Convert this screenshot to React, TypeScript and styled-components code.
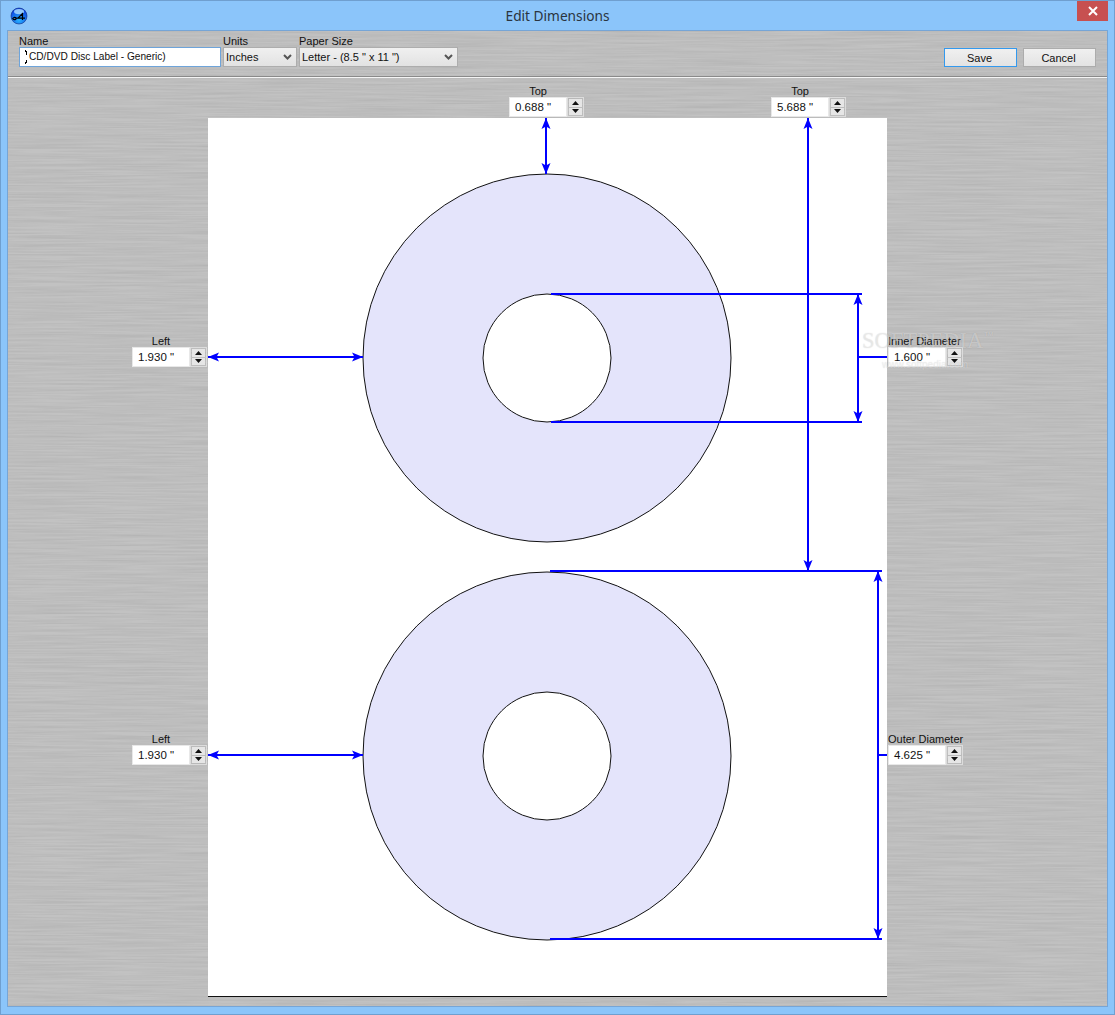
import React from 'react';
import styled, { createGlobalStyle } from 'styled-components';

const brushed = `url("data:image/svg+xml,%3Csvg xmlns='http://www.w3.org/2000/svg' width='1100' height='980'%3E%3Cfilter id='b' x='0' y='0' width='100%25' height='100%25'%3E%3CfeTurbulence type='fractalNoise' baseFrequency='0.012 0.55' numOctaves='3' seed='7'/%3E%3CfeColorMatrix values='0 0 0 0 0 0 0 0 0 0 0 0 0 0 0 0.9 0 0 0 -0.27'/%3E%3C/filter%3E%3Crect width='1100' height='980' fill='%23c2c2c2'/%3E%3Crect width='1100' height='980' filter='url(%23b)' fill='black' opacity='.12'/%3E%3C/svg%3E")`;

const GlobalStyle = createGlobalStyle`
  html, body { margin: 0; padding: 0; background: #8bc5fa; }
  body { font-family: "Liberation Sans", "Noto Sans", sans-serif; font-size: 11px; color: #111; }
`;

const Window = styled.div`
  position: relative;
  width: 1115px;
  height: 1015px;
  box-sizing: border-box;
  border: 1px solid #6f9fcf;
  background: #8bc5fa;
  display: flex;
  flex-direction: column;
  overflow: hidden;
`;

const TitleBar = styled.header`
  height: 29px;
  flex: none;
  display: flex;
  align-items: center;
  justify-content: center;
  position: relative;
  font-family: "Noto Sans", sans-serif;
  font-size: 13.7px;
  color: #2a3440;
  padding-bottom: 1px;
  box-sizing: border-box;
`;

const AppIcon = styled.svg`
  position: absolute;
  left: 9px;
  top: 6px;
`;

const CloseButton = styled.div`
  position: absolute;
  right: 6px;
  top: 0;
  width: 31px;
  height: 20px;
  background: #c75050;
  display: flex;
  align-items: center;
  justify-content: center;
`;

const Client = styled.main`
  flex: 1;
  margin: 0 6px 7px 6px;
  border: 1px solid #76a5d6;
  background-color: #c0c0c0;
  background-image: ${brushed};
  display: flex;
  flex-direction: column;
  min-height: 0;
`;

const Toolbar = styled.div`
  height: 46px;
  flex: none;
  box-sizing: border-box;
  padding: 4px 11px 0;
  display: flex;
  align-items: flex-start;
  gap: 2px;
  border-bottom: 1px solid #8a8a8a;
  box-shadow: 0 1px 0 #f4f4f4;
`;

const Group = styled.label<{ $w: number }>`
  display: flex;
  flex-direction: column;
  width: ${p => p.$w}px;
  line-height: 12px;
`;

const NameBox = styled.div`
  height: 20px;
  box-sizing: border-box;
  border: 1px solid #6ea4da;
  background: #fff;
  display: flex;
  align-items: center;
  padding-left: 5px;
  white-space: nowrap;
  line-height: 16px;
  font-size: 10.15px;
`;

const SelectBox = styled.div`
  height: 20px;
  box-sizing: border-box;
  border: 1px solid #adadad;
  background: linear-gradient(#f0f0f0, #e2e2e2);
  display: flex;
  align-items: center;
  justify-content: space-between;
  padding: 0 4px 0 2px;
  white-space: nowrap;
`;

const Spacer = styled.div`
  flex: 1;
`;

const ActionButton = styled.button<{ $primary?: boolean }>`
  width: 73px;
  height: 19px;
  margin-top: 13px;
  margin-left: ${p => (p.$primary ? 0 : 4)}px;
  padding: 0 2px 0 0;
  border: 1px solid ${p => (p.$primary ? '#3399ee' : '#acacac')};
  background: linear-gradient(#f0f0f0, #e3e3e3);
  font: inherit;
  color: #111;
`;

const Canvas = styled.div`
  flex: 1;
  min-height: 0;
  padding: 40px 0 0 200px;
  margin-top: 1px;
`;

const Page = styled.div`
  position: relative;
  width: 679px;
  height: 879px;
  box-sizing: border-box;
  background: #fff;
  border-bottom: 1px solid #111;
`;

const Drawing = styled.svg`
  display: block;
`;

const SpinField = styled.div<{ $x: number; $y: number }>`
  position: absolute;
  left: ${p => p.$x}px;
  top: ${p => p.$y}px;
  width: 75px;
  display: grid;
  grid-template-columns: 58px 17px;
  line-height: 12px;
`;

const SpinLabel = styled.div`
  grid-column: 1;
  grid-row: 1;
  text-align: center;
  white-space: nowrap;
  height: 12px;
`;

const SpinInput = styled.div`
  grid-column: 1;
  grid-row: 2;
  height: 20px;
  box-sizing: border-box;
  border: 1px solid #e8e8e8;
  background: #fff;
  padding-left: 5px;
  display: flex;
  align-items: center;
  font-size: 11.5px;
`;

const SpinButtons = styled.div`
  grid-column: 2;
  grid-row: 2;
  height: 20px;
  box-sizing: border-box;
  border: 1px solid #dcdcdc;
  padding: 1px;
  display: flex;
  flex-direction: column;
  gap: 1px;
`;

const SpinStep = styled.div`
  flex: 1;
  background: #e6e6e6;
  display: flex;
  align-items: center;
  justify-content: center;
`;

const Watermark = styled.div`
  position: absolute;
  left: 861px;
  top: 327px;
  font-family: "Liberation Serif", serif;
  font-size: 22.5px;
  line-height: 26px;
  color: rgba(255, 255, 255, 0.42);
  text-shadow: 0 0 1px rgba(0, 0, 0, 0.18);
  white-space: nowrap;
  pointer-events: none;
`;

const TradeMark = styled.sup`
  font-family: "Liberation Sans", sans-serif;
  font-size: 6px;
  line-height: 0;
  vertical-align: 12px;
  margin-left: 1px;
`;

const WatermarkSub = styled.div`
  position: absolute;
  left: 881px;
  top: 358px;
  font-size: 10px;
  line-height: 12px;
  color: rgba(255, 255, 255, 0.4);
  text-shadow: 0 0 1px rgba(0, 0, 0, 0.15);
  white-space: nowrap;
  pointer-events: none;
`;

const Chevron = () => (
  <svg width="9" height="6" viewBox="0 0 9 6">
    <path d="M1 1l3.5 3.5L8 1" fill="none" stroke="#555" strokeWidth="2" />
  </svg>
);

const Tri = ({ down }: { down?: boolean }) => (
  <svg width="7" height="4" viewBox="0 0 7 4">
    <path d={down ? 'M0 0h7L3.5 4z' : 'M0 4h7L3.5 0z'} fill="#111" />
  </svg>
);

const fields = [
  { label: 'Top', value: '0.688 "', x: 301, y: -33 },
  { label: 'Top', value: '5.688 "', x: 563, y: -33 },
  { label: 'Left', value: '1.930 "', x: -76, y: 217 },
  { label: 'Inner Diameter', value: '1.600 "', x: 680, y: 217 },
  { label: 'Left', value: '1.930 "', x: -76, y: 615 },
  { label: 'Outer Diameter', value: '4.625 "', x: 680, y: 615 },
];

const blue = '#0000ff';

const Disc = ({ cy }: { cy: number }) => (
  <>
    <circle cx="547" cy={cy} r="184" fill="#e4e4fb" stroke="#111" strokeWidth="1" />
    <circle cx="547" cy={cy} r="64" fill="#fff" stroke="#111" strokeWidth="1" />
  </>
);

const Line = ({ d, both }: { d: string; both?: boolean }) => (
  <path
    d={d}
    fill="none"
    stroke={blue}
    strokeWidth="2"
    markerStart={both ? 'url(#arrowStart)' : undefined}
    markerEnd={both ? 'url(#arrowEnd)' : undefined}
  />
);

export default function App() {
  return (
    <>
      <GlobalStyle />
      <Window>
        <TitleBar>
          <AppIcon width="18" height="18" viewBox="0 0 18 18">
            <defs>
              <radialGradient id="orb" cx="50%" cy="75%" r="70%">
                <stop offset="0" stopColor="#28b4ff" />
                <stop offset="1" stopColor="#0a3fe0" />
              </radialGradient>
            </defs>
            <circle cx="9" cy="9" r="8" fill="url(#orb)" stroke="#0a2a80" strokeWidth="0.6" />
            <ellipse cx="9" cy="4.6" rx="5" ry="2.6" fill="#a8dcff" opacity="0.85" />
            <path d="M2.5 12c1-2 3-2.2 3.5-.8s-2 2-3 1M6 11.2h9M13 6L8 11.2M12.5 7v6" fill="none" stroke="#000" strokeWidth="1.2" />
          </AppIcon>
          Edit Dimensions
          <CloseButton>
            <svg width="10" height="10" viewBox="0 0 10 10">
              <path d="M1 1l8 8M9 1l-8 8" stroke="#fff" strokeWidth="2" />
            </svg>
          </CloseButton>
        </TitleBar>
        <Client>
          <Toolbar>
            <Group $w={202}>
              Name
              <NameBox>
                <svg width="4" height="14" viewBox="0 0 4 14">
                  <path d="M0 0h1v1h1v4H1V2H0zM1 10h1v3H1v1H0v-2h1z" fill="#000" />
                </svg>
                CD/DVD Disc Label - Generic)
              </NameBox>
            </Group>
            <Group $w={74}>
              Units
              <SelectBox>
                Inches
                <Chevron />
              </SelectBox>
            </Group>
            <Group $w={159}>
              Paper Size
              <SelectBox>
                Letter - (8.5 " x 11 ")
                <Chevron />
              </SelectBox>
            </Group>
            <Spacer />
            <ActionButton $primary>Save</ActionButton>
            <ActionButton>Cancel</ActionButton>
          </Toolbar>
          <Canvas>
            <Page>
              <Drawing width="679" height="878" viewBox="208 118 679 878">
                <defs>
                  <marker id="arrowEnd" markerUnits="userSpaceOnUse" markerWidth="12" markerHeight="10" refX="11" refY="5" orient="auto">
                    <path d="M0 0.5L11 5L0 9.5L2.5 5z" fill={blue} />
                  </marker>
                  <marker id="arrowStart" markerUnits="userSpaceOnUse" markerWidth="12" markerHeight="10" refX="1" refY="5" orient="auto">
                    <path d="M12 0.5L1 5L12 9.5L9.5 5z" fill={blue} />
                  </marker>
                </defs>
                <Disc cy={358} />
                <Disc cy={756} />
                <Line d="M546 118V174" both />
                <Line d="M808 118V571" both />
                <Line d="M208 357H363" both />
                <Line d="M208 755H363" both />
                <Line d="M551 294H862M551 422H862M858 357H887" />
                <Line d="M858 294V422" both />
                <Line d="M550 571H882M550 939H882M878 755H887" />
                <Line d="M878 571V939" both />
              </Drawing>
              {fields.map((f, i) => (
                <SpinField key={i} $x={f.x} $y={f.y}>
                  <SpinLabel>{f.label}</SpinLabel>
                  <SpinInput>{f.value}</SpinInput>
                  <SpinButtons>
                    <SpinStep><Tri /></SpinStep>
                    <SpinStep><Tri down /></SpinStep>
                  </SpinButtons>
                </SpinField>
              ))}
            </Page>
          </Canvas>
        </Client>
        <Watermark>SOFTPEDIA<TradeMark>TM</TradeMark></Watermark>
        <WatermarkSub>www.softpedia.com</WatermarkSub>
      </Window>
    </>
  );
}
